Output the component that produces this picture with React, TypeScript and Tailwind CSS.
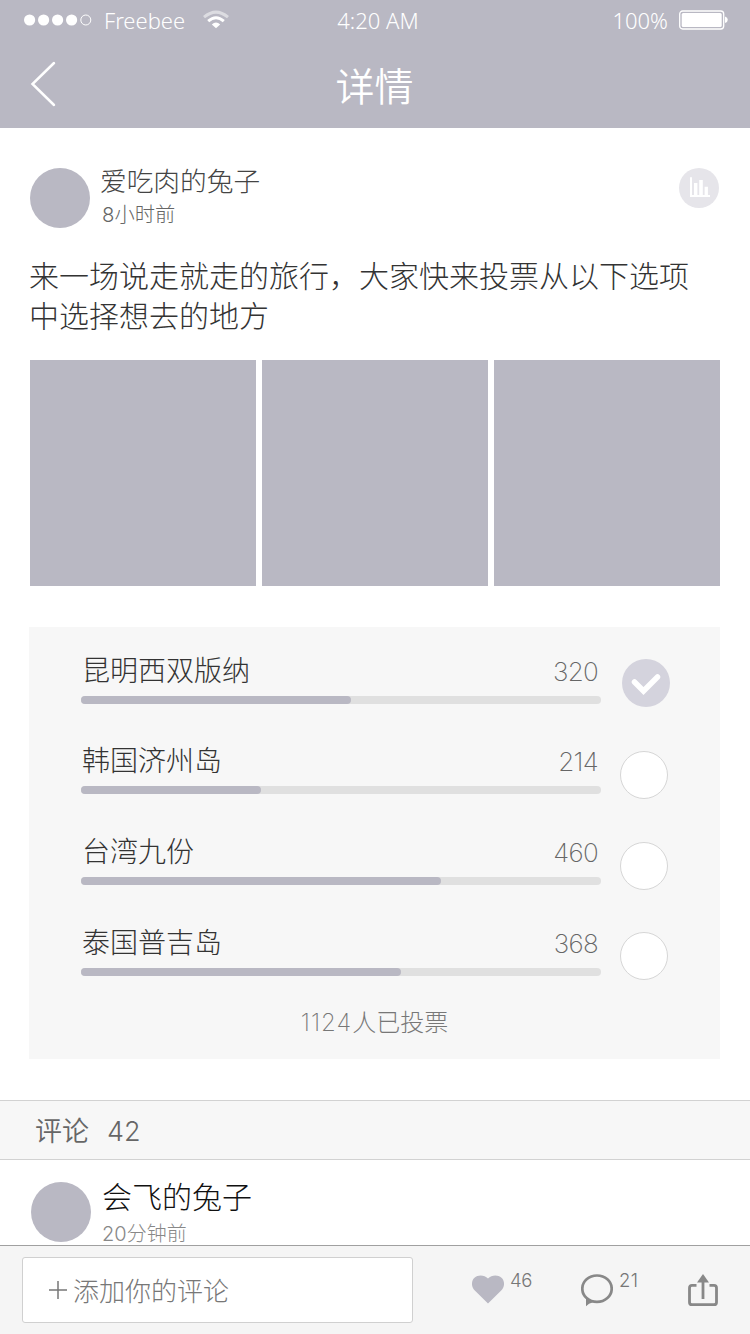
const cjk = "font-['Inter','Noto_Sans_CJK_SC',sans-serif]";
const cn = "font-['Noto_Sans_CJK_SC',sans-serif]";

const options = [
  { name: '昆明西双版纳', votes: 320, width: 270, picked: true, row: 'h-[90px]', dot: '' },
  { name: '韩国济州岛', votes: 214, width: 180, picked: false, row: 'h-[91px]', dot: 'mt-[7px]' },
  { name: '台湾九份', votes: 460, width: 360, picked: false, row: 'h-[91px]', dot: 'mt-[7px]' },
  { name: '泰国普吉岛', votes: 368, width: 320, picked: false, row: 'h-[91px]', dot: 'mt-[6px]' },
];

function StatusBar() {
  return (
    <div className="grid h-10 grid-cols-3 items-center whitespace-nowrap pl-6 pr-[22px] font-['Noto_Sans',sans-serif] text-[22px] font-[350] leading-10 text-white">
      <div className="flex items-center">
        <svg width="68" height="12" viewBox="0 0 68 12" fill="#fff">
          <circle cx="5.6" cy="6" r="5.6" />
          <circle cx="19.6" cy="6" r="5.6" />
          <circle cx="33.6" cy="6" r="5.6" />
          <circle cx="47.6" cy="6" r="5.6" />
          <circle cx="61.8" cy="6" r="5" fill="none" stroke="#fff" strokeWidth="1" />
        </svg>
        <span className="ml-3 w-[82px]">Freebee</span>
        <svg className="ml-[17px]" width="26" height="20" viewBox="0 0 26 20" fill="none" stroke="#fff" strokeWidth="3">
          <path d="M1 7.2 Q13 -3 25 7.2" opacity=".5" />
          <path d="M5.2 11.2 Q13 4.4 20.8 11.2" />
          <path d="M8.8 14.4 Q13 10.8 17.2 14.4 L13 18.2Z" fill="#fff" stroke="none" />
        </svg>
      </div>
      <div className="pl-[4px] text-center">4:20 AM</div>
      <div className="flex items-center justify-end">
        <span>100%</span>
        <svg className="ml-[10px]" width="50" height="20" viewBox="0 0 50 20">
          <rect x="1.700" y="1" width="44" height="18" rx="3" fill="none" stroke="#fff" strokeWidth="1.3" />
          <rect x="3.700" y="3" width="40" height="14" rx="1.5" fill="#fff" />
          <path d="M47 6.500q2.800 .8 2.800 3.300t-2.800 3.300z" fill="#fff" />
        </svg>
      </div>
    </div>
  );
}

function NavBar() {
  return (
    <div className="grid h-[88px] grid-cols-3 items-center pl-[30px] pr-[30px] text-white">
      <svg width="28" height="46" viewBox="0 0 28 46" fill="none" stroke="#fff" strokeWidth="2.5" strokeLinecap="round">
        <path d="M24 2 L2.5 23 L24 44" />
      </svg>
      <h1 className={`${cn} pr-[1px] text-center text-[39px] font-[350] leading-[86px]`}>详情</h1>
    </div>
  );
}

function Author() {
  return (
    <div className="flex h-[60px]">
      <div className="h-[60px] w-[60px] rounded-full bg-[#b9b8c3]" />
      <div className="ml-[10px] flex flex-1 flex-col">
        <div className={`${cn} h-[30px] text-[26.7px] font-light leading-[23px] text-[#444]`}>爱吃肉的兔子</div>
        <div className={`${cjk} ml-[2px] h-[30px] text-[20.3px] font-light leading-[34px] text-[#666]`}>8小时前</div>
      </div>
      <svg className="mr-[1px]" width="40" height="40" viewBox="0 0 40 40">
        <circle cx="20" cy="20" r="20" fill="#e6e5ea" />
        <path d="M11 9.300h2V27h18v2H11zM15 15h3.400v13H15zM20.200 12h3.600v16h-3.600zM25.600 18.700h3.300v9.300h-3.300z" fill="#fff" />
      </svg>
    </div>
  );
}

function Poll() {
  return (
    <div className="ml-[-1px] mt-[41px] h-[432px] bg-[#f7f7f7] pl-[52px] pr-[50px] pt-[27px]">
      {options.map((o) => (
        <div key={o.name} className={`flex ${o.row}`}>
          <div className="w-[520px]">
            <div className="flex h-[42px] justify-between pl-[1px] pr-[3px]">
              <span className={`${cn} text-[28px] font-light leading-[30px] text-[#333]`}>{o.name}</span>
              <span className="font-['Inter',sans-serif] text-[26px] font-extralight leading-[35px] tracking-[-0.7px] text-[#666]">{o.votes}</span>
            </div>
            <div className="h-2 rounded-full bg-[#e0e0e0]">
              <div className="h-2 rounded-full bg-[#b9b8c3]" style={{ width: o.width }} />
            </div>
          </div>
          {o.picked ? (
            <svg className="ml-[21px] mt-[5px]" width="48" height="48" viewBox="0 0 48 48" fill="none">
              <circle cx="24" cy="24" r="24" fill="#d4d3dd" />
              <path d="M12.500 23 L21.500 32 L35.500 18" stroke="#fff" strokeWidth="5.500" strokeLinecap="round" />
            </svg>
          ) : (
            <div className={`ml-[19px] h-12 w-12 rounded-full border border-[#d6d6d6] bg-white ${o.dot}`} />
          )}
        </div>
      ))}
      <div className={`${cjk} flex h-[40px] justify-center whitespace-nowrap pr-[2px] text-[24px] font-extralight leading-[12px] text-[#777]`}>
        <span className="tracking-[1px]">1124</span>人已投票
      </div>
    </div>
  );
}

function ActionBar() {
  return (
    <div className="flex h-[89px] items-start border-t border-[#a0a0a0] bg-[#f5f5f5] pl-[22px] pt-[11px]">
      <div className="flex h-[66px] w-[391px] items-center rounded-[3px] border border-[#d0d0d0] bg-white pl-[26px]">
        <svg width="18" height="18" viewBox="0 0 18 18" stroke="#777" strokeWidth="1.5">
          <path d="M0 9h18M9 0v18" />
        </svg>
        <span className={`${cn} ml-[6px] text-[26px] font-light leading-[60px] text-[#777]`}>添加你的评论</span>
      </div>
      <svg className="ml-[59px] mt-[18px]" width="32" height="29" viewBox="0 0 32 29" fill="#b9b8c3">
        <path d="M16 28.500 L2.800 15.500 C-1 11.700-.9 6 2.500 2.800 C6.300-.8 12.500 0 16 3.400 C19.500 0 25.700-.8 29.500 2.800 C32.900 6 33 11.700 29.200 15.500Z" />
      </svg>
      <span className="ml-[6px] mt-[11px] w-[30px] font-['Inter',sans-serif] text-[18.500px] font-light leading-[24px] tracking-[-0.5px] text-[#777]">46</span>
      <svg className="ml-[41px] mt-[17px]" width="32" height="33" viewBox="0 0 32 33" fill="none">
        <ellipse cx="16" cy="14.7" rx="14.7" ry="13.2" stroke="#888" strokeWidth="2.7" />
        <path d="M5 23v9.300q2.600-2.800 7-4z" fill="#888" />
      </svg>
      <span className="ml-[6px] mt-[11px] w-[30px] font-['Inter',sans-serif] text-[18.500px] font-light leading-[24px] tracking-[0.5px] text-[#777]">21</span>
      <svg className="ml-[39px] mt-[17px]" width="30" height="33" viewBox="0 0 30 33" fill="none" stroke="#888" strokeWidth="2.8">
        <path d="M8.500 11.400H4q-2.500 0-2.500 2.500V28.200q0 2.500 2.500 2.500H26q2.500 0 2.500-2.500V13.900q0-2.500-2.500-2.500H21.500M15 8v17" />
        <path d="M15 0 L21 8.500H9Z" fill="#888" stroke="none" />
      </svg>
    </div>
  );
}

export default function App() {
  return (
    <div className="flex h-[1334px] w-[750px] flex-col overflow-hidden bg-white">
      <header className="bg-[#b9b8c3]">
        <StatusBar />
        <NavBar />
      </header>
      <main className="h-[972px] px-[30px] pt-10">
        <Author />
        <p className={`${cn} ml-[-1px] mt-[26px] h-[106px] whitespace-nowrap text-[30px] font-light leading-10 text-[#333]`}>
          来一场说走就走的旅行，大家快来投票从以下选项
          <br />
          中选择想去的地方
        </p>
        <div className="flex gap-[6px]">
          <div className="h-[226px] w-[226px] bg-[#b9b8c3]" />
          <div className="h-[226px] w-[226px] bg-[#b9b8c3]" />
          <div className="h-[226px] w-[226px] bg-[#b9b8c3]" />
        </div>
        <Poll />
      </main>
      <section className="h-[145px]">
        <div className="flex h-[60px] border-y border-[#d2d2d2] bg-[#f7f7f7] pl-[35px] leading-[58px] text-[#666]">
          <span className={`${cn} text-[27px] font-[350]`}>评论</span>
          <span className="ml-[18px] font-['Inter',sans-serif] text-[27px] font-light leading-[61px]">42</span>
        </div>
        <div className="flex pl-[31px] pt-[22px]">
          <div className="h-[60px] w-[60px] rounded-full bg-[#b9b8c3]" />
          <div className="ml-[11px] flex h-[63px] flex-col">
            <div className={`${cn} h-[41px] text-[30px] font-light leading-[26px] text-[#111]`}>会飞的兔子</div>
            <div className={`${cjk} h-[22px] text-[20px] font-light leading-[22px] text-[#888]`}>20分钟前</div>
          </div>
        </div>
      </section>
      <ActionBar />
    </div>
  );
}
